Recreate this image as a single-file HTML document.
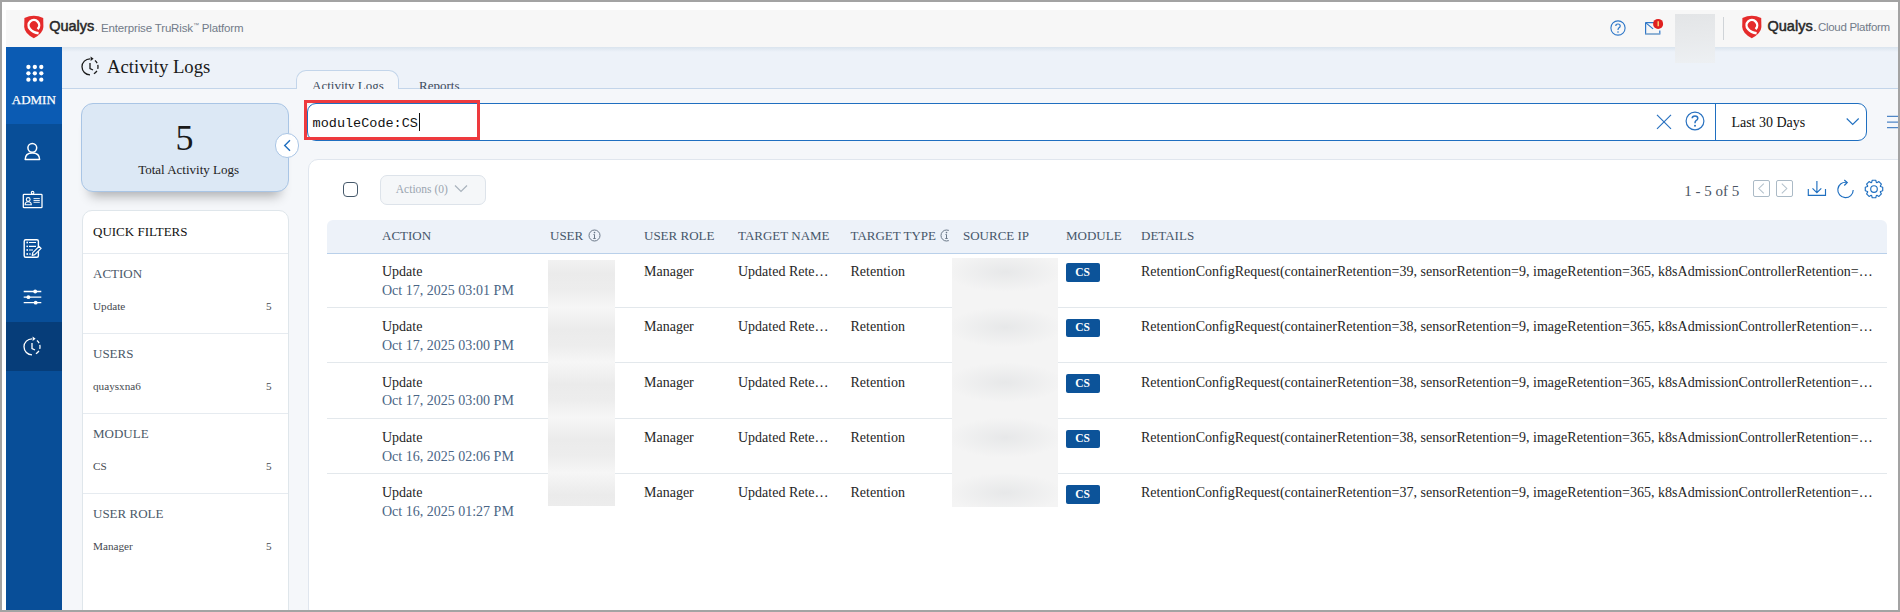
<!DOCTYPE html>
<html><head><meta charset="utf-8">
<style>
*{box-sizing:border-box;margin:0;padding:0}
html,body{width:1900px;height:612px;overflow:hidden;background:#fff;font-family:'Liberation Serif',serif}
.a{position:absolute}
.t{position:absolute;white-space:pre;line-height:1}
</style></head><body>
<div class="a" style="left:6px;top:10px;width:1892px;height:37px;background:#f7f7f7"></div>
<div class="a" style="left:62px;top:47px;width:1836px;height:565px;background:#f5f7fa"></div>
<div class="a" style="left:62px;top:47px;width:1836px;height:42px;background:#edf2f9;border-bottom:1px solid #c3d5ea"></div>
<div class="a" style="left:62px;top:47px;width:1836px;height:5px;background:linear-gradient(#dae4ee,rgba(237,242,249,0))"></div>
<div class="a" style="left:6px;top:47px;width:56px;height:565px;background:#084e98"></div>
<div class="a" style="left:6px;top:47px;width:56px;height:77px;background:#0b5bb3"></div>
<div class="a" style="left:6px;top:322px;width:56px;height:49px;background:#063d79"></div>
<svg class="a" style="left:26px;top:64px;" width="18" height="18" viewBox="0 0 18 18"><circle cx="2.40" cy="3.00" r="2.15" fill="#fff"/><circle cx="2.40" cy="9.35" r="2.15" fill="#fff"/><circle cx="2.40" cy="15.70" r="2.15" fill="#fff"/><circle cx="8.85" cy="3.00" r="2.15" fill="#fff"/><circle cx="8.85" cy="9.35" r="2.15" fill="#fff"/><circle cx="8.85" cy="15.70" r="2.15" fill="#fff"/><circle cx="15.30" cy="3.00" r="2.15" fill="#fff"/><circle cx="15.30" cy="9.35" r="2.15" fill="#fff"/><circle cx="15.30" cy="15.70" r="2.15" fill="#fff"/></svg>
<div class="t" style="left:-266.2px;width:600px;text-align:center;top:93.11px;font-size:13px;color:#fff;font-family:'Liberation Serif',serif;-webkit-text-stroke:0.25px #fff">ADMIN</div>
<svg class="a" style="left:24px;top:142px;" width="17" height="19" viewBox="0 0 17 19"><circle cx="8.3" cy="5.8" r="4.4" fill="none" stroke="#fff" stroke-width="1.5"/><path d="M1.2 17.6 Q1.2 11 8.3 11 Q15.6 11 15.6 17.6 Z" fill="none" stroke="#fff" stroke-width="1.5" stroke-linejoin="round"/></svg>
<svg class="a" style="left:22px;top:190px;" width="22" height="19" viewBox="0 0 22 19"><rect x="1.3" y="4.3" width="18.7" height="13.4" rx="0.8" fill="none" stroke="#fff" stroke-width="1.3"/><circle cx="10.6" cy="2.7" r="1.3" fill="none" stroke="#fff" stroke-width="1.1"/><circle cx="6.2" cy="9.5" r="1.9" fill="none" stroke="#fff" stroke-width="1.1"/><path d="M3.1 14.7 Q3.1 11.7 6.2 11.7 Q9.3 11.7 9.3 14.7 Z" fill="none" stroke="#fff" stroke-width="1.1"/><path d="M11.5 8.6h6.3M11.5 10.5h6.3M11.5 12.3h6.3" stroke="#fff" stroke-width="0.9"/></svg>
<svg class="a" style="left:22px;top:238px;" width="21" height="21" viewBox="0 0 21 21"><rect x="2.2" y="1.7" width="14.2" height="17.6" rx="1.5" fill="none" stroke="#fff" stroke-width="1.4"/><path d="M7 4.5h7M7 8.3h7M7 12h4M7 16h2" stroke="#fff" stroke-width="1.2"/><circle cx="5.2" cy="4.5" r="0.9" fill="#fff"/><circle cx="5.2" cy="8.3" r="0.9" fill="#fff"/><circle cx="5.2" cy="12" r="0.9" fill="#fff"/><circle cx="5.2" cy="16" r="0.9" fill="#fff"/><path d="M10.2 17.4l0.6-2.7 6.3-6.3 2 2-6.3 6.3z" fill="#084e98" stroke="#fff" stroke-width="1.2" stroke-linejoin="round"/></svg>
<svg class="a" style="left:23px;top:289px;" width="19" height="16" viewBox="0 0 19 16"><path d="M0.7 2.5h17.6M0.7 8.2h17.6M0.7 13.7h17.6" stroke="#fff" stroke-width="1.3"/><circle cx="12.2" cy="2.5" r="1.9" fill="#fff"/><circle cx="5.4" cy="8.2" r="1.9" fill="#fff"/><circle cx="12.7" cy="13.7" r="1.9" fill="#fff"/></svg>
<svg class="a" style="left:18.3px;top:333.7px;" width="30" height="26" viewBox="0 0 30 26"><path d="M14 4.8 A8 8 0 0 0 14 20.8" fill="none" stroke="#fff" stroke-width="1.3"/><path d="M14 4.8 A8 8 0 0 1 14 20.8" fill="none" stroke="#fff" stroke-width="1.3" stroke-dasharray="0 5.3 3.35 1.95 4.0 2.1 4.2 20"/><path d="M14.6 2.6 L17.6 4.8 L14.6 7 Z" fill="#fff"/><path d="M14 9v5.5l3 1.5" fill="none" stroke="#fff" stroke-width="1.3"/></svg>
<svg class="a" style="left:23.5px;top:14.5px;" width="20" height="24" viewBox="0 0 20 24"><path d="M0.4 3 Q9.8 -1.6 19.2 3 L19.4 12 Q19 18.5 9.8 23.2 Q0.6 18.5 0.2 12 Z" fill="#e52b2b"/><path d="M13.6 14.1 A5.3 5.3 0 1 0 6 13.95 Q9 17.6 14.6 18.2" fill="none" stroke="#fff" stroke-width="2.4"/></svg>
<div class="t" style="left:49.2px;top:19.13px;font-size:14.5px;color:#262626;font-family:'Liberation Sans',sans-serif;-webkit-text-stroke:0.5px #2a2a2a">Qualys</div>
<div class="a" style="left:95.8px;top:29.8px;width:1.6px;height:1.6px;background:#555;border-radius:50%"></div>
<div class="t" style="left:101px;top:22.27px;font-size:11.5px;color:#727b89;font-family:'Liberation Sans',sans-serif;letter-spacing:-0.15px">Enterprise TruRisk<span style="font-size:6px;vertical-align:5px">™</span> Platform</div>
<svg class="a" style="left:1609px;top:19.3px;" width="18" height="18" viewBox="0 0 18 18"><circle cx="9" cy="9" r="7.1" fill="none" stroke="#2e77c8" stroke-width="1.1"/><path d="M6.8 7 Q6.8 5 9 5 Q11.2 5 11.2 7 Q11.2 8.2 9.8 8.9 Q9 9.4 9 10.9" fill="none" stroke="#2e77c8" stroke-width="1.2"/><circle cx="9" cy="13" r="0.8" fill="#2e77c8"/></svg>
<svg class="a" style="left:1643px;top:17px;" width="22" height="20" viewBox="0 0 22 20"><path d="M2.6 5.6h9M2.6 5.6v11.4h14.2v-3.5" fill="none" stroke="#2e77c8" stroke-width="1.2"/><path d="M16.8 17H2.6" stroke="#8fb0d0" stroke-width="1.4"/><path d="M2.6 5.6l7.5 6.3" fill="none" stroke="#2e77c8" stroke-width="1.2"/><circle cx="15.1" cy="6.9" r="5" fill="#e0201f"/><path d="M15.2 4.2v5" stroke="#ffe680" stroke-width="1.3"/></svg>
<div class="a" style="left:1675px;top:14px;width:40px;height:48.5px;background:linear-gradient(175deg,#e3e5e7,#e8eaec 50%,#edf0f3)"></div>
<div class="a" style="left:1723px;top:17px;width:1px;height:23px;background:#d0d4d8"></div>
<svg class="a" style="left:1742.3px;top:14.5px;" width="20" height="24" viewBox="0 0 20 24"><path d="M0.4 3 Q9.8 -1.6 19.2 3 L19.4 12 Q19 18.5 9.8 23.2 Q0.6 18.5 0.2 12 Z" fill="#e52b2b"/><path d="M13.6 14.1 A5.3 5.3 0 1 0 6 13.95 Q9 17.6 14.6 18.2" fill="none" stroke="#fff" stroke-width="2.4"/></svg>
<div class="t" style="left:1767.5px;top:19.13px;font-size:14.5px;color:#262626;font-family:'Liberation Sans',sans-serif;-webkit-text-stroke:0.5px #2a2a2a">Qualys</div>
<div class="a" style="left:1814px;top:29.8px;width:1.6px;height:1.6px;background:#555;border-radius:50%"></div>
<div class="t" style="left:1818px;top:22.27px;font-size:11.5px;color:#727b89;font-family:'Liberation Sans',sans-serif;letter-spacing:-0.3px">Cloud Platform</div>
<svg class="a" style="left:76px;top:54px;" width="30" height="26" viewBox="0 0 30 26"><path d="M14 4.8 A8 8 0 0 0 14 20.8" fill="none" stroke="#1a1a1a" stroke-width="1.3"/><path d="M14 4.8 A8 8 0 0 1 14 20.8" fill="none" stroke="#1a1a1a" stroke-width="1.3" stroke-dasharray="0 5.3 3.35 1.95 4.0 2.1 4.2 20"/><path d="M14.6 2.6 L17.6 4.8 L14.6 7 Z" fill="#1a1a1a"/><path d="M14 9v5.5l3 1.5" fill="none" stroke="#1a1a1a" stroke-width="1.3"/></svg>
<div class="t" style="left:107px;top:57.94px;font-size:18.7px;color:#1a1a1a;font-family:'Liberation Serif',serif;">Activity Logs</div>
<div class="a" style="left:295.5px;top:70px;width:103.5px;height:19px;background:#f5f7fa;border:1px solid #c3d5ea;border-bottom:none;border-radius:10px 10px 0 0"></div>
<div class="a" style="left:62px;top:47px;width:1836px;height:42px;overflow:hidden">
<div class="t" style="left:250px;top:32.41px;font-size:13px;color:#3d4b5c;font-family:'Liberation Serif',serif;">Activity Logs</div>
<div class="t" style="left:357px;top:32.41px;font-size:13px;color:#3d4b5c;font-family:'Liberation Serif',serif;">Reports</div>
</div>
<div class="a" style="left:81px;top:103px;width:208px;height:89px;background:#dce8f5;border:1px solid #a9c5e5;border-radius:12px;box-shadow:0 13px 12px -9px rgba(0,0,0,0.3)"></div>
<div class="t" style="left:-115.5px;width:600px;text-align:center;top:120.05px;font-size:36px;color:#1a1a1a;font-family:'Liberation Serif',serif;">5</div>
<div class="t" style="left:-111.4px;width:600px;text-align:center;top:162.91px;font-size:13px;color:#222;font-family:'Liberation Serif',serif;">Total Activity Logs</div>
<div class="a" style="left:274.8px;top:133px;width:24.5px;height:24.5px;background:#fff;border:1px solid #a9c5e5;border-radius:50%"></div>
<svg class="a" style="left:282px;top:139px;" width="10" height="14" viewBox="0 0 10 14"><path d="M8 1.2L2.7 6.5 8 11.8" fill="none" stroke="#1f6fc0" stroke-width="1.4"/></svg>
<div class="a" style="left:81.5px;top:210.3px;width:207.5px;height:410px;background:#fff;border:1px solid #dfe6eb;border-radius:10px"></div>
<div class="t" style="left:93px;top:224.91px;font-size:13px;color:#111;font-family:'Liberation Serif',serif;">QUICK FILTERS</div>
<div class="a" style="left:83px;top:253px;width:205px;height:1px;background:#e6ebf0"></div>
<div class="t" style="left:93px;top:266.81px;font-size:13px;color:#4a5868;font-family:'Liberation Serif',serif;">ACTION</div>
<div class="t" style="left:93px;top:300.62px;font-size:11.2px;color:#45494f;font-family:'Liberation Serif',serif;">Update</div>
<div class="t" style="right:1628.5px;top:300.62px;font-size:11.2px;color:#45494f;font-family:'Liberation Serif',serif;">5</div>
<div class="a" style="left:83px;top:333px;width:205px;height:1px;background:#e6ebf0"></div>
<div class="t" style="left:93px;top:346.81px;font-size:13px;color:#4a5868;font-family:'Liberation Serif',serif;">USERS</div>
<div class="t" style="left:93px;top:380.62px;font-size:11.2px;color:#45494f;font-family:'Liberation Serif',serif;">quaysxna6</div>
<div class="t" style="right:1628.5px;top:380.62px;font-size:11.2px;color:#45494f;font-family:'Liberation Serif',serif;">5</div>
<div class="a" style="left:83px;top:413px;width:205px;height:1px;background:#e6ebf0"></div>
<div class="t" style="left:93px;top:426.81px;font-size:13px;color:#4a5868;font-family:'Liberation Serif',serif;">MODULE</div>
<div class="t" style="left:93px;top:460.62px;font-size:11.2px;color:#45494f;font-family:'Liberation Serif',serif;">CS</div>
<div class="t" style="right:1628.5px;top:460.62px;font-size:11.2px;color:#45494f;font-family:'Liberation Serif',serif;">5</div>
<div class="a" style="left:83px;top:493px;width:205px;height:1px;background:#e6ebf0"></div>
<div class="t" style="left:93px;top:506.81px;font-size:13px;color:#4a5868;font-family:'Liberation Serif',serif;">USER ROLE</div>
<div class="t" style="left:93px;top:540.62px;font-size:11.2px;color:#45494f;font-family:'Liberation Serif',serif;">Manager</div>
<div class="t" style="right:1628.5px;top:540.62px;font-size:11.2px;color:#45494f;font-family:'Liberation Serif',serif;">5</div>
<div class="a" style="left:307px;top:103px;width:1560px;height:38px;background:#fff;border:1.5px solid #1f6fc0;border-radius:9px"></div>
<div class="a" style="left:1715px;top:103px;width:1.3px;height:38px;background:#1f6fc0"></div>
<div class="t" style="left:312.6px;top:117.25px;font-size:13.5px;color:#111;font-family:'Liberation Mono',monospace;">moduleCode:CS</div>
<div class="a" style="left:419px;top:113px;width:1px;height:17.5px;background:#111"></div>
<svg class="a" style="left:1656px;top:114px;" width="16" height="16" viewBox="0 0 16 16"><path d="M1 0.8l14 14M15 0.8L1 14.8" stroke="#2a72c0" stroke-width="1.2"/></svg>
<svg class="a" style="left:1685px;top:110.5px;" width="20" height="20" viewBox="0 0 20 20"><circle cx="10" cy="10" r="8.9" fill="none" stroke="#2a72c0" stroke-width="1.2"/><path d="M7.2 7.3 Q7.2 4.9 10 4.9 Q12.8 4.9 12.8 7.3 Q12.8 8.8 11 9.7 Q10 10.3 10 12.2" fill="none" stroke="#2a72c0" stroke-width="1.5"/><circle cx="10" cy="14.8" r="1" fill="#2a72c0"/></svg>
<div class="t" style="left:1731.4px;top:115.68px;font-size:14px;color:#111;font-family:'Liberation Serif',serif;">Last 30 Days</div>
<svg class="a" style="left:1846px;top:117px;" width="14" height="10" viewBox="0 0 14 10"><path d="M0.7 1.5l6 6 6-6" fill="none" stroke="#1f6fc0" stroke-width="1.1"/></svg>
<svg class="a" style="left:1886px;top:114px;" width="14" height="16" viewBox="0 0 14 16"><path d="M1 2.4h13M1 8.1h13M1 13.7h13" stroke="#4f86c6" stroke-width="1.2"/></svg>
<div class="a" style="left:304px;top:100px;width:176px;height:40px;border:3px solid #ee3a3e"></div>
<div class="a" style="left:307.5px;top:159px;width:1600px;height:460px;background:#fff;border:1px solid #e0e6ee;border-radius:10px"></div>
<div class="a" style="left:343px;top:182px;width:15px;height:15px;border:1.5px solid #46596b;border-radius:4px;background:#fff"></div>
<div class="a" style="left:380px;top:175px;width:105.5px;height:29.7px;background:#f5f7f9;border:1px solid #dde3ea;border-radius:7px"></div>
<div class="t" style="left:395.8px;top:184.27px;font-size:11.5px;color:#9aa5b0;font-family:'Liberation Serif',serif;">Actions (0)</div>
<svg class="a" style="left:454px;top:183.5px;" width="14" height="10" viewBox="0 0 14 10"><path d="M1 1.5l6 6 6-6" fill="none" stroke="#a9b3bd" stroke-width="1.2"/></svg>
<div class="t" style="left:1684.3px;top:184.24px;font-size:15px;color:#4b5563;font-family:'Liberation Serif',serif;">1 - 5 of 5</div>
<div class="a" style="left:1753px;top:180px;width:16.8px;height:17px;border:1px solid #abbac6;border-radius:2px"></div>
<svg class="a" style="left:1753px;top:180px;" width="17" height="17" viewBox="0 0 17 17"><path d="M10.8 3.6l-5 4.9 5 4.9" fill="none" stroke="#b3c1cc" stroke-width="1.05"/></svg>
<div class="a" style="left:1775.8px;top:180px;width:16.8px;height:17px;border:1px solid #abbac6;border-radius:2px"></div>
<svg class="a" style="left:1775.8px;top:180px;" width="17" height="17" viewBox="0 0 17 17"><path d="M5.8 3.6l5 4.9-5 4.9" fill="none" stroke="#b3c1cc" stroke-width="1.05"/></svg>
<svg class="a" style="left:1806px;top:179px;" width="22" height="18" viewBox="0 0 22 18"><path d="M2.3 10v6.3h17.2V10" fill="none" stroke="#1f6fc0" stroke-width="1.15"/><path d="M10.9 2v11.5M6.5 9.3l4.4 4.3 4.4-4.3" fill="none" stroke="#1f6fc0" stroke-width="1.15"/></svg>
<svg class="a" style="left:1836px;top:178px;" width="20" height="22" viewBox="0 0 20 22"><path d="M17.2 12 A7.7 7.7 0 1 1 10.8 4.4" fill="none" stroke="#1f6fc0" stroke-width="1.15"/><path d="M8.3 2l3 2.5-3 3" fill="none" stroke="#1f6fc0" stroke-width="1.15"/></svg>
<svg class="a" style="left:1863.5px;top:178.5px;" width="20" height="20" viewBox="0 0 20 20"><polygon points="18.72,8.23 18.72,11.77 16.46,12.43 16.29,12.85 17.42,14.92 14.92,17.42 12.85,16.29 12.43,16.46 11.77,18.72 8.23,18.72 7.57,16.46 7.15,16.29 5.08,17.42 2.58,14.92 3.71,12.85 3.54,12.43 1.28,11.77 1.28,8.23 3.54,7.57 3.71,7.15 2.58,5.08 5.08,2.58 7.15,3.71 7.57,3.54 8.23,1.28 11.77,1.28 12.43,3.54 12.85,3.71 14.92,2.58 17.42,5.08 16.29,7.15 16.46,7.57" fill="none" stroke="#1f6fc0" stroke-width="1.15" stroke-linejoin="round"/><circle cx="10" cy="10" r="3.3" fill="none" stroke="#1f6fc0" stroke-width="1.15"/></svg>
<div class="a" style="left:327px;top:220px;width:1560px;height:34px;background:#edf2f9;border-bottom:1px solid #b9d0ea;border-radius:6px 6px 0 0"></div>
<div class="t" style="left:382px;top:229.41px;font-size:13px;color:#46566a;font-family:'Liberation Serif',serif;">ACTION</div>
<div class="t" style="left:550px;top:229.41px;font-size:13px;color:#46566a;font-family:'Liberation Serif',serif;">USER</div>
<div class="t" style="left:644px;top:229.41px;font-size:13px;color:#46566a;font-family:'Liberation Serif',serif;">USER ROLE</div>
<div class="t" style="left:738px;top:229.41px;font-size:13px;color:#46566a;font-family:'Liberation Serif',serif;">TARGET NAME</div>
<div class="t" style="left:850.5px;top:229.41px;font-size:13px;color:#46566a;font-family:'Liberation Serif',serif;">TARGET TYPE</div>
<div class="t" style="left:963px;top:229.41px;font-size:13px;color:#46566a;font-family:'Liberation Serif',serif;">SOURCE IP</div>
<div class="t" style="left:1066px;top:229.41px;font-size:13px;color:#46566a;font-family:'Liberation Serif',serif;">MODULE</div>
<div class="t" style="left:1141px;top:229.41px;font-size:13px;color:#46566a;font-family:'Liberation Serif',serif;">DETAILS</div>
<svg class="a" style="left:588px;top:229px;" width="13" height="13" viewBox="0 0 13 13"><circle cx="6.5" cy="6.5" r="5.5" fill="none" stroke="#6a7888" stroke-width="1"/><path d="M6.5 5.5v4M5.3 9.5h2.4M5.5 5.5h1" stroke="#6a7888" stroke-width="1"/><circle cx="6.5" cy="3.6" r="0.8" fill="#6a7888"/></svg>
<div class="a" style="left:940px;top:229px;width:9px;height:14px;overflow:hidden">
<svg class="a" style="left:0px;top:0px;" width="13" height="13" viewBox="0 0 13 13"><circle cx="6.5" cy="6.5" r="5.5" fill="none" stroke="#6a7888" stroke-width="1"/><path d="M6.5 5.5v4M5.3 9.5h2.4M5.5 5.5h1" stroke="#6a7888" stroke-width="1"/><circle cx="6.5" cy="3.6" r="0.8" fill="#6a7888"/></svg>
</div>
<div class="a" style="left:327px;top:307px;width:1560px;height:1px;background:#e3e8ec"></div>
<div class="t" style="left:382px;top:265.17px;font-size:14px;color:#262626;font-family:'Liberation Serif',serif;">Update</div>
<div class="t" style="left:382px;top:283.88px;font-size:14px;color:#4a6585;font-family:'Liberation Serif',serif;">Oct 17, 2025 03:01 PM</div>
<div class="t" style="left:644px;top:265.17px;font-size:14px;color:#262626;font-family:'Liberation Serif',serif;">Manager</div>
<div class="t" style="left:738px;top:265.17px;font-size:14px;color:#262626;font-family:'Liberation Serif',serif;">Updated Rete…</div>
<div class="t" style="left:850.5px;top:265.17px;font-size:14px;color:#262626;font-family:'Liberation Serif',serif;">Retention</div>
<div class="a" style="left:1066px;top:263.0px;width:34px;height:18.6px;background:#0c5399;border-radius:2px"></div>
<div class="t" style="left:782.5999999999999px;width:600px;text-align:center;top:266.67px;font-size:11.5px;color:#fff;font-family:'Liberation Serif',serif;font-weight:bold">CS</div>
<div class="t" style="left:1141px;top:265.17px;font-size:14px;color:#262626;font-family:'Liberation Serif',serif;letter-spacing:0.022px">RetentionConfigRequest(containerRetention=39, sensorRetention=9, imageRetention=365, k8sAdmissionControllerRetention=…</div>
<div class="a" style="left:327px;top:362px;width:1560px;height:1px;background:#e3e8ec"></div>
<div class="t" style="left:382px;top:320.42px;font-size:14px;color:#262626;font-family:'Liberation Serif',serif;">Update</div>
<div class="t" style="left:382px;top:339.12px;font-size:14px;color:#4a6585;font-family:'Liberation Serif',serif;">Oct 17, 2025 03:00 PM</div>
<div class="t" style="left:644px;top:320.42px;font-size:14px;color:#262626;font-family:'Liberation Serif',serif;">Manager</div>
<div class="t" style="left:738px;top:320.42px;font-size:14px;color:#262626;font-family:'Liberation Serif',serif;">Updated Rete…</div>
<div class="t" style="left:850.5px;top:320.42px;font-size:14px;color:#262626;font-family:'Liberation Serif',serif;">Retention</div>
<div class="a" style="left:1066px;top:318.5px;width:34px;height:18.6px;background:#0c5399;border-radius:2px"></div>
<div class="t" style="left:782.5999999999999px;width:600px;text-align:center;top:322.17px;font-size:11.5px;color:#fff;font-family:'Liberation Serif',serif;font-weight:bold">CS</div>
<div class="t" style="left:1141px;top:320.42px;font-size:14px;color:#262626;font-family:'Liberation Serif',serif;letter-spacing:0.022px">RetentionConfigRequest(containerRetention=38, sensorRetention=9, imageRetention=365, k8sAdmissionControllerRetention=…</div>
<div class="a" style="left:327px;top:418px;width:1560px;height:1px;background:#e3e8ec"></div>
<div class="t" style="left:382px;top:375.67px;font-size:14px;color:#262626;font-family:'Liberation Serif',serif;">Update</div>
<div class="t" style="left:382px;top:394.38px;font-size:14px;color:#4a6585;font-family:'Liberation Serif',serif;">Oct 17, 2025 03:00 PM</div>
<div class="t" style="left:644px;top:375.67px;font-size:14px;color:#262626;font-family:'Liberation Serif',serif;">Manager</div>
<div class="t" style="left:738px;top:375.67px;font-size:14px;color:#262626;font-family:'Liberation Serif',serif;">Updated Rete…</div>
<div class="t" style="left:850.5px;top:375.67px;font-size:14px;color:#262626;font-family:'Liberation Serif',serif;">Retention</div>
<div class="a" style="left:1066px;top:374.0px;width:34px;height:18.6px;background:#0c5399;border-radius:2px"></div>
<div class="t" style="left:782.5999999999999px;width:600px;text-align:center;top:377.67px;font-size:11.5px;color:#fff;font-family:'Liberation Serif',serif;font-weight:bold">CS</div>
<div class="t" style="left:1141px;top:375.67px;font-size:14px;color:#262626;font-family:'Liberation Serif',serif;letter-spacing:0.022px">RetentionConfigRequest(containerRetention=38, sensorRetention=9, imageRetention=365, k8sAdmissionControllerRetention=…</div>
<div class="a" style="left:327px;top:473px;width:1560px;height:1px;background:#e3e8ec"></div>
<div class="t" style="left:382px;top:430.92px;font-size:14px;color:#262626;font-family:'Liberation Serif',serif;">Update</div>
<div class="t" style="left:382px;top:449.62px;font-size:14px;color:#4a6585;font-family:'Liberation Serif',serif;">Oct 16, 2025 02:06 PM</div>
<div class="t" style="left:644px;top:430.92px;font-size:14px;color:#262626;font-family:'Liberation Serif',serif;">Manager</div>
<div class="t" style="left:738px;top:430.92px;font-size:14px;color:#262626;font-family:'Liberation Serif',serif;">Updated Rete…</div>
<div class="t" style="left:850.5px;top:430.92px;font-size:14px;color:#262626;font-family:'Liberation Serif',serif;">Retention</div>
<div class="a" style="left:1066px;top:429.5px;width:34px;height:18.6px;background:#0c5399;border-radius:2px"></div>
<div class="t" style="left:782.5999999999999px;width:600px;text-align:center;top:433.17px;font-size:11.5px;color:#fff;font-family:'Liberation Serif',serif;font-weight:bold">CS</div>
<div class="t" style="left:1141px;top:430.92px;font-size:14px;color:#262626;font-family:'Liberation Serif',serif;letter-spacing:0.022px">RetentionConfigRequest(containerRetention=38, sensorRetention=9, imageRetention=365, k8sAdmissionControllerRetention=…</div>
<div class="t" style="left:382px;top:486.17px;font-size:14px;color:#262626;font-family:'Liberation Serif',serif;">Update</div>
<div class="t" style="left:382px;top:504.88px;font-size:14px;color:#4a6585;font-family:'Liberation Serif',serif;">Oct 16, 2025 01:27 PM</div>
<div class="t" style="left:644px;top:486.17px;font-size:14px;color:#262626;font-family:'Liberation Serif',serif;">Manager</div>
<div class="t" style="left:738px;top:486.17px;font-size:14px;color:#262626;font-family:'Liberation Serif',serif;">Updated Rete…</div>
<div class="t" style="left:850.5px;top:486.17px;font-size:14px;color:#262626;font-family:'Liberation Serif',serif;">Retention</div>
<div class="a" style="left:1066px;top:485.0px;width:34px;height:18.6px;background:#0c5399;border-radius:2px"></div>
<div class="t" style="left:782.5999999999999px;width:600px;text-align:center;top:488.67px;font-size:11.5px;color:#fff;font-family:'Liberation Serif',serif;font-weight:bold">CS</div>
<div class="t" style="left:1141px;top:486.17px;font-size:14px;color:#262626;font-family:'Liberation Serif',serif;letter-spacing:0.022px">RetentionConfigRequest(containerRetention=37, sensorRetention=9, imageRetention=365, k8sAdmissionControllerRetention=…</div>
<div class="a" style="left:547.5px;top:260px;width:67.5px;height:246px;background:repeating-linear-gradient(180deg,#f2f2f2 0px,#ebebeb 14px,#ededed 30px,#f6f6f6 47px,#f2f2f2 55.2px)"></div>
<div class="a" style="left:952px;top:258px;width:106px;height:249px;background:radial-gradient(ellipse 58px 20px at 53px 14.0px,#e7e8e9,rgba(244,244,244,0)),radial-gradient(ellipse 58px 20px at 53px 69.2px,#e7e8e9,rgba(244,244,244,0)),radial-gradient(ellipse 58px 20px at 53px 124.4px,#e7e8e9,rgba(244,244,244,0)),radial-gradient(ellipse 58px 20px at 53px 179.6px,#e7e8e9,rgba(244,244,244,0)),radial-gradient(ellipse 58px 20px at 53px 234.8px,#e7e8e9,rgba(244,244,244,0)),#f4f4f4"></div>
<div class="a" style="left:0;top:0;width:1900px;height:612px;border:2px solid #a3a3a3;z-index:99"></div>
</body></html>
